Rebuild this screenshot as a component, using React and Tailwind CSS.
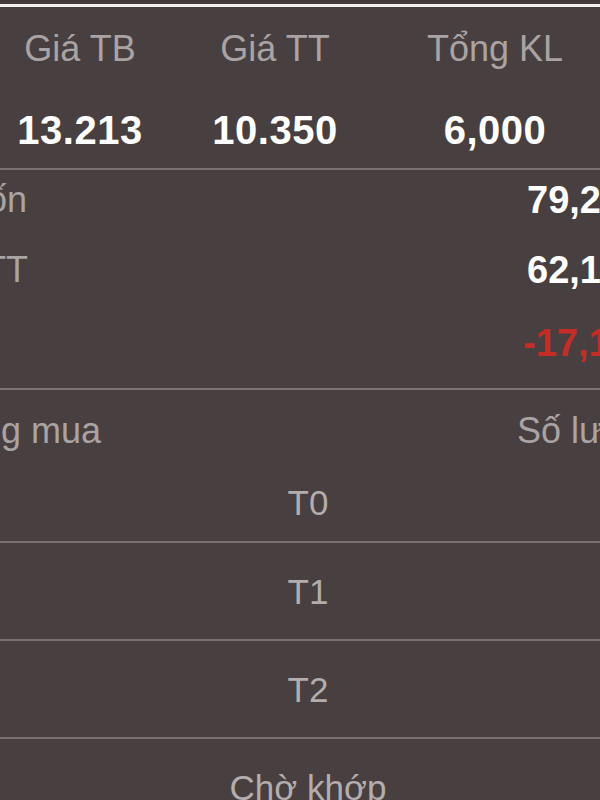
const summary = [
  { label: 'Giá TB', value: '13.213' },
  { label: 'Giá TT', value: '10.350' },
  { label: 'Tổng KL', value: '6,000' },
];

const details = [
  { label: 'Giá trị vốn', value: '79,290,000', tone: 'text-white', h: 'h-[60px]', end: 'w-[27px]', start: 'ml-[500px]' },
  { label: 'Giá trị TT', value: '62,100,000', tone: 'text-white', h: 'h-[80px]', end: 'w-[28px]', start: 'ml-[499px]' },
  { label: 'Lãi/lỗ', value: '-17,190,000', tone: 'text-[#c72b26]', h: 'h-[66px]', end: 'w-0', start: 'ml-[523px]' },
];

const groups = ['T1', 'T2', 'Chờ khớp'];

function Divider() {
  return <div className="h-[2px] w-full bg-[#7a7272]" />;
}

export default function App() {
  return (
    <div
      className="w-[600px] h-[800px] overflow-hidden bg-[#483f40] text-[36px] leading-none"
      style={{ fontFamily: '"Liberation Sans", Arial, sans-serif' }}
    >
      <div className="h-[4px] bg-[#423a3b]" />
      <div className="h-[3px] bg-[#f2f0f0]" />

      {/* summary */}
      <div className="grid grid-cols-[160px_230px_210px] h-[161px] grid-rows-[84px_77px]">
        {summary.map((s) => (
          <div key={s.label} className="flex items-center justify-center text-[#aaa3a3]">
            {s.label}
          </div>
        ))}
        {summary.map((s) => (
          <div key={s.value} className="flex items-center justify-center text-white font-bold text-[40px] tracking-[0.5px]">
            {s.value}
          </div>
        ))}
      </div>
      <Divider />

      {/* detail rows */}
      <div className="pb-[12px]">
        {details.map((d, i) => (
          <div key={i} className={`flex items-center ${d.h}`}>
            <div className={`${d.end} shrink-0 flex justify-end whitespace-nowrap text-[#aaa3a3]`}>
              <span>{d.label}</span>
            </div>
            <div className={`${d.start} shrink-0 whitespace-nowrap font-bold text-[38px] ${d.tone}`}>{d.value}</div>
          </div>
        ))}
      </div>
      <Divider />

      {/* holdings */}
      <div className="flex items-center h-[82px] text-[#aaa3a3]">
        <div className="w-[101px] shrink-0 flex justify-end whitespace-nowrap">
          <span>Hàng mua</span>
        </div>
        <div className="ml-[416px] shrink-0 whitespace-nowrap">Số lượng</div>
      </div>
      <div className="flex items-center justify-center h-[69px] pb-[8px] pl-[16px] text-[35px] text-[#b3adad]">T0</div>
      {groups.map((g) => (
        <div key={g}>
          <Divider />
          <div className="flex items-center justify-center h-[96px] pl-[16px] text-[35px] text-[#b3adad]">{g}</div>
        </div>
      ))}
    </div>
  );
}
